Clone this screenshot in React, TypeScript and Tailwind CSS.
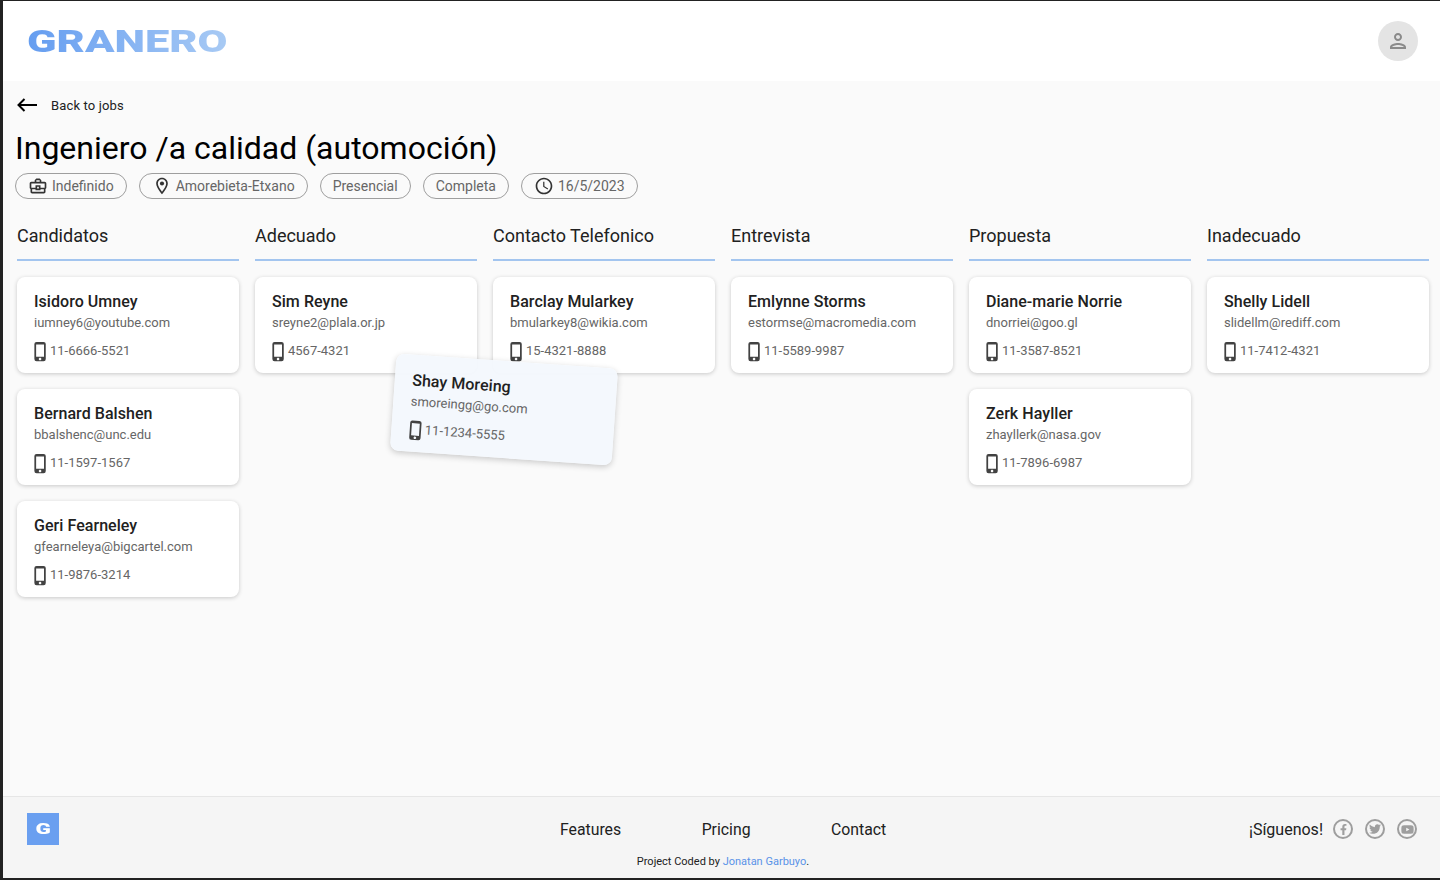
import React from 'react';
import { MdOutlineBusinessCenter, MdOutlineLocationOn, MdOutlineAccessTime, MdPhoneIphone, MdOutlinePerson } from 'react-icons/md';
import { FaFacebookF, FaTwitter, FaYoutube } from 'react-icons/fa';

type Candidate = { name: string; email: string; phone: string };

const columns: { title: string; cards: Candidate[] }[] = [
  {
    title: 'Candidatos',
    cards: [
      { name: 'Isidoro Umney', email: 'iumney6@youtube.com', phone: '11-6666-5521' },
      { name: 'Bernard Balshen', email: 'bbalshenc@unc.edu', phone: '11-1597-1567' },
      { name: 'Geri Fearneley', email: 'gfearneleya@bigcartel.com', phone: '11-9876-3214' },
    ],
  },
  { title: 'Adecuado', cards: [{ name: 'Sim Reyne', email: 'sreyne2@plala.or.jp', phone: '4567-4321' }] },
  { title: 'Contacto Telefonico', cards: [{ name: 'Barclay Mularkey', email: 'bmularkey8@wikia.com', phone: '15-4321-8888' }] },
  { title: 'Entrevista', cards: [{ name: 'Emlynne Storms', email: 'estormse@macromedia.com', phone: '11-5589-9987' }] },
  {
    title: 'Propuesta',
    cards: [
      { name: 'Diane-marie Norrie', email: 'dnorriei@goo.gl', phone: '11-3587-8521' },
      { name: 'Zerk Hayller', email: 'zhayllerk@nasa.gov', phone: '11-7896-6987' },
    ],
  },
  { title: 'Inadecuado', cards: [{ name: 'Shelly Lidell', email: 'slidellm@rediff.com', phone: '11-7412-4321' }] },
];

function CardBody({ c }: { c: Candidate }) {
  return (
    <>
      <p className="text-[16px] leading-[24px] font-medium tracking-[0.05px] text-[#212121]">{c.name}</p>
      <p className="text-[13px] leading-[18px] text-[#666666]">{c.email}</p>
      <div className="flex items-center mt-[9px] h-[20px] text-[13px] text-[#666666]">
        <MdPhoneIphone className="text-[#424242] shrink-0 -ml-[4px] -mr-[1px]" size={21} />
        <span>{c.phone}</span>
      </div>
    </>
  );
}

function Chip({ icon, label }: { icon?: React.ReactNode; label: string }) {
  return (
    <div className="h-[26px] flex items-center gap-[4px] px-[12px] rounded-full border border-[#9e9e9e] text-[14px] text-[#666666]">
      {icon}
      <span>{label}</span>
    </div>
  );
}

export default function App() {
  return (
    <div className="relative h-[880px] overflow-hidden flex flex-col bg-[#fafafa] border-l-[3px] border-t border-b-2 border-[#222222] font-['Roboto',sans-serif]">
      {/* Header */}
      <header className="h-[80px] shrink-0 bg-white flex items-center justify-between pl-[24px] pr-[22px]">
        <span className="inline-block origin-left scale-x-[1.4] font-black text-[31px] leading-none pt-[1px] bg-gradient-to-r from-[#659df0] to-[#a8caf4] bg-clip-text text-transparent">
          GRANERO
        </span>
        <div className="w-[40px] h-[40px] rounded-full bg-[#e4e4e4] flex items-center justify-center">
          <MdOutlinePerson className="text-[#8a8a8a]" size={24} />
        </div>
      </header>

      <main className="flex-1 px-[12px] pt-[12px]">
        <div className="flex items-center h-[24px] text-[13px] text-[#212121]">
          <svg className="ml-[2px] shrink-0" width="20" height="14" viewBox="0 0 20 14" fill="none" stroke="#000000" strokeWidth="2">
            <path d="M20 7H1.5M7.5 1 1.5 7l6 6" />
          </svg>
          <span className="ml-[14px] pt-[1px] tracking-[0.15px]">Back to jobs</span>
        </div>
        <h1 className="text-[32px] leading-[40px] text-black mt-[11px]">Ingeniero /a calidad (automoción)</h1>
        <div className="flex gap-[12px] mt-[5px]">
          <Chip icon={<MdOutlineBusinessCenter className="text-[#333333]" size={20} />} label="Indefinido" />
          <Chip icon={<MdOutlineLocationOn className="text-[#333333]" size={20} />} label="Amorebieta-Etxano" />
          <Chip label="Presencial" />
          <Chip label="Completa" />
          <Chip icon={<MdOutlineAccessTime className="text-[#333333]" size={20} />} label="16/5/2023" />
        </div>

        {/* Board */}
        <div className="flex gap-[16px] mt-[21px] pl-[2px]">
          {columns.map((col) => (
            <section key={col.title} className="w-[222px] shrink-0">
              <h2 className="text-[18px] leading-[24px] text-[#212121] h-[35px] pt-[4px] border-b-2 border-[#a3c5ef] box-content">
                {col.title}
              </h2>
              <div className="flex flex-col gap-[16px] mt-[16px]">
                {col.cards.map((c) => (
                  <div key={c.name} className="h-[96px] bg-white rounded-[8px] px-[17px] pt-[13px] shadow-[0_1px_4px_rgba(0,0,0,0.2)]">
                    <CardBody c={c} />
                  </div>
                ))}
              </div>
            </section>
          ))}
        </div>
      </main>

      {/* Card being dragged */}
      <div className="absolute left-[390px] top-[360px] w-[222px] h-[97px] rotate-[4deg] bg-[#f3f8fd]/95 rounded-[8px] px-[17.5px] pt-[14px] shadow-[0_2px_6px_rgba(0,0,0,0.2)]">
        <CardBody c={{ name: 'Shay Moreing', email: 'smoreingg@go.com', phone: '11-1234-5555' }} />
      </div>

      {/* Footer */}
      <footer className="relative h-[82px] shrink-0 bg-[#f5f5f5] border-t border-[#e6e6e6]">
        <div className="flex items-start justify-between pl-[24px] pr-[23px] pt-[16px]">
          <div className="w-[32px] h-[32px] bg-[#6a9ff0] flex items-center justify-center">
            <span className="inline-block scale-x-[1.5] font-black text-[15px] leading-none text-white">G</span>
          </div>
          <nav className="absolute left-[557px] top-[23px] flex gap-[80.5px] text-[15.8px] leading-[20px] text-[#212121]">
            <a>Features</a>
            <a>Pricing</a>
            <a>Contact</a>
          </nav>
          <div className="flex items-center gap-[12px] h-[32px]">
            <span className="text-[16px] text-[#212121] -mr-[2px] pt-[1px]">¡Síguenos!</span>
            <span className="w-[20px] h-[20px] rounded-full border-2 border-[#9e9e9e] flex items-center justify-center text-[#9e9e9e]">
              <FaFacebookF size={11} />
            </span>
            <span className="w-[20px] h-[20px] rounded-full border-2 border-[#9e9e9e] flex items-center justify-center text-[#9e9e9e]">
              <FaTwitter size={12} />
            </span>
            <span className="w-[20px] h-[20px] rounded-full border-2 border-[#9e9e9e] flex items-center justify-center text-[#9e9e9e]">
              <FaYoutube size={13} />
            </span>
          </div>
        </div>
        <p className="text-center text-[11px] leading-[14px] text-[#212121] mt-[10px] pl-[3px]">
          Project Coded by <span className="text-[#5a93e8]">Jonatan Garbuyo</span>.
        </p>
      </footer>
    </div>
  );
}
